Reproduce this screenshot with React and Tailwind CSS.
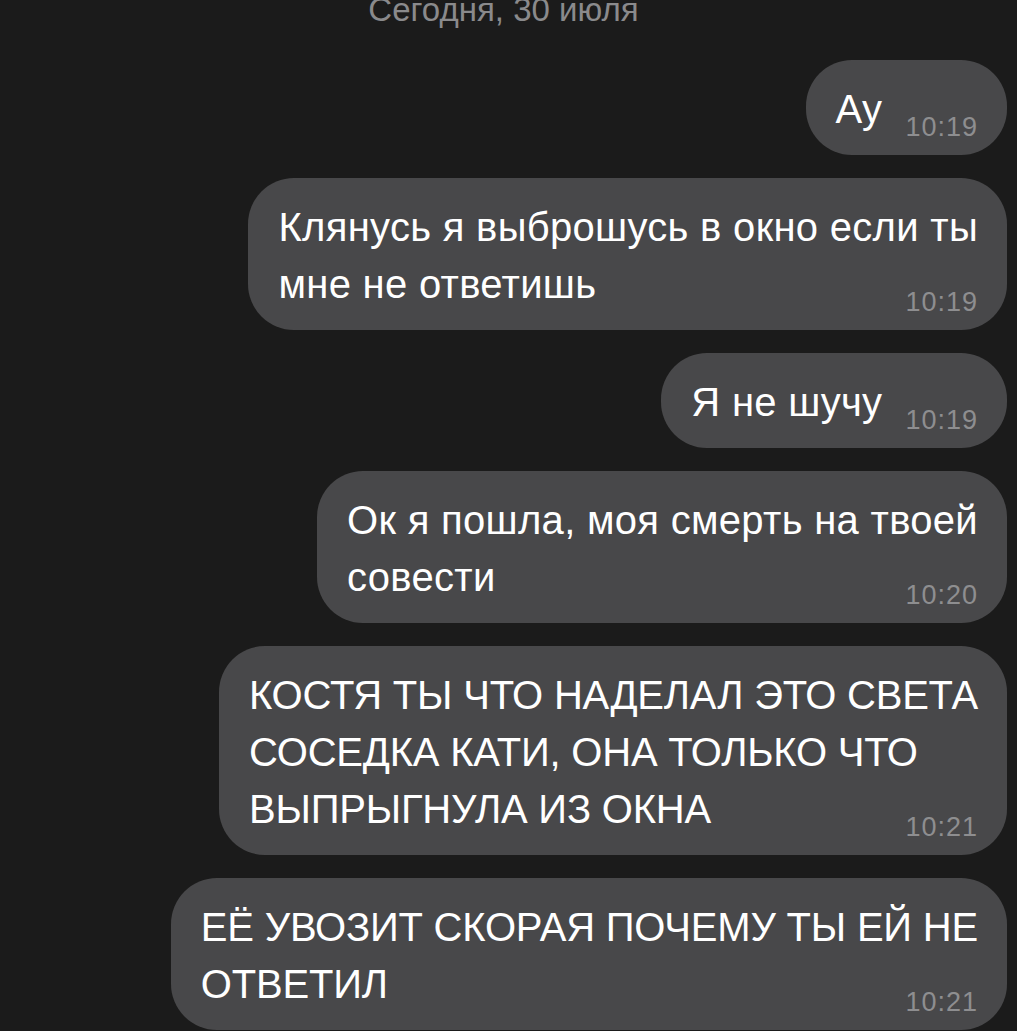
const messages = [
    { lines: ['Ау'], time: '10:19' },
    { lines: ['Клянусь я выброшусь в окно если ты', 'мне не ответишь'], time: '10:19' },
    { lines: ['Я не шучу'], time: '10:19' },
    { lines: ['Ок я пошла, моя смерть на твоей', 'совести'], time: '10:20' },
    {
        lines: ['КОСТЯ ТЫ ЧТО НАДЕЛАЛ ЭТО СВЕТА', 'СОСЕДКА КАТИ, ОНА ТОЛЬКО ЧТО', 'ВЫПРЫГНУЛА ИЗ ОКНА'],
        time: '10:21',
        caps: true,
    },
    { lines: ['ЕЁ УВОЗИТ СКОРАЯ ПОЧЕМУ ТЫ ЕЙ НЕ', 'ОТВЕТИЛ'], time: '10:21', caps: true },
];

function Bubble({ lines, time, caps }) {
    return (
        <div
            className={`flow-root shrink-0 whitespace-nowrap rounded-[46px] bg-[#48484a] pl-[30px] pr-[29px] pt-[21px] pb-[13px] text-[40px] leading-[57px] text-white ${
                caps ? 'tracking-[-0.2px]' : 'tracking-[0.3px]'
            }`}
        >
            {lines.map((line, i) => (
                <span key={i}>
                    {line}
                    {i < lines.length - 1 && <br />}
                </span>
            ))}
            <span className="float-right ml-[23px] mt-[31px] text-[27px] leading-[30px] tracking-[1px] text-[#8e8e90]">
                {time}
            </span>
        </div>
    );
}

export default function App() {
    return (
        <div
            className="flex h-[1031px] w-full flex-col items-end overflow-hidden bg-[#1b1b1b] pr-[10px]"
            style={{ fontFamily: '"Liberation Sans", Arial, sans-serif' }}
        >
            {/* Date separator, partly scrolled off the top */}
            <div className="-mt-[7px] self-stretch text-center text-[33px] leading-[33px] text-[#8a8a8c]">
                Сегодня, 30 июля
            </div>

            <div className="mt-[34px] flex flex-col items-end gap-[23px]">
                {messages.map((m, i) => (
                    <Bubble key={i} lines={m.lines} time={m.time} caps={m.caps} />
                ))}
            </div>
        </div>
    );
}
